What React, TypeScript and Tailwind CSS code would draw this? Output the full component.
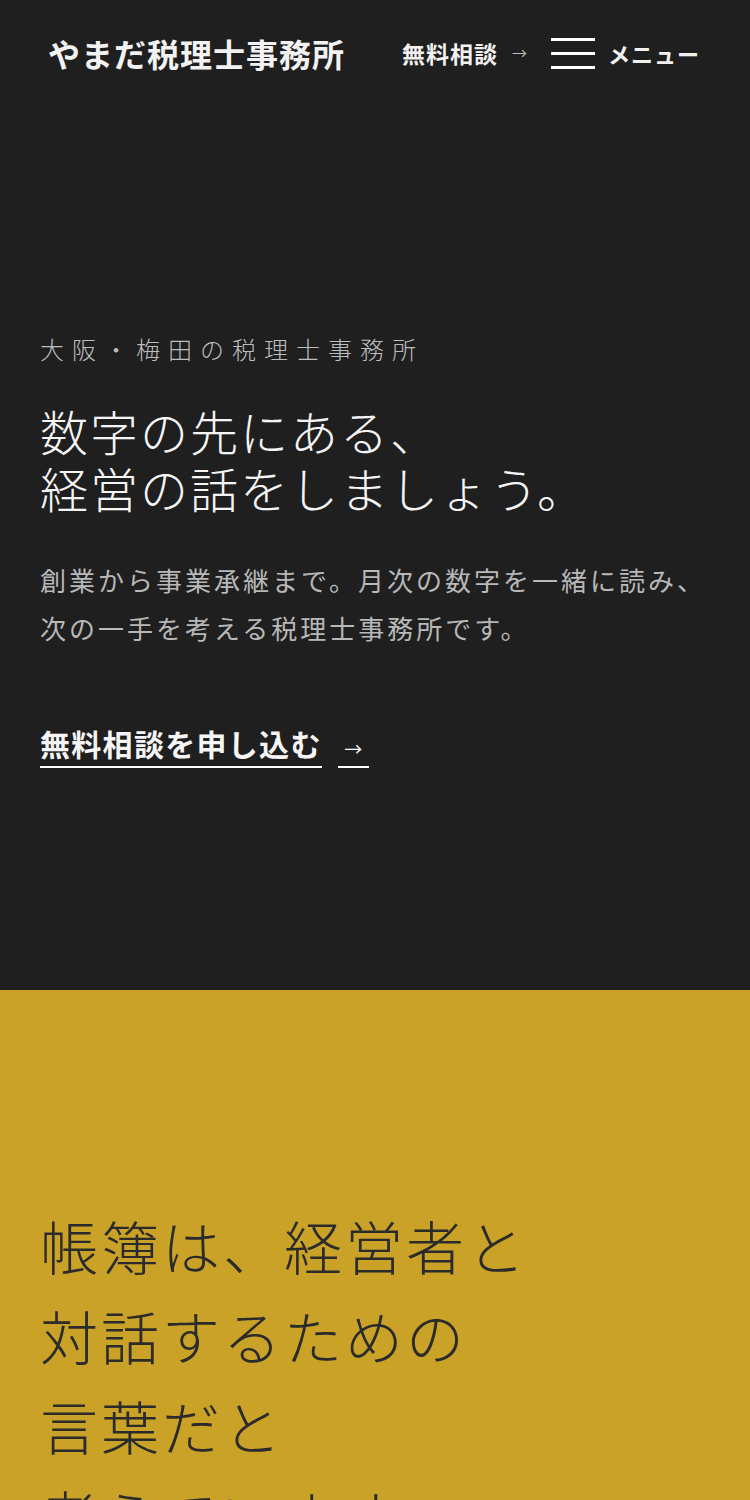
export default function App() {
  const font = { fontFamily: '"Noto Sans CJK JP", "Noto Sans", sans-serif' };
  return (
    <div className="w-[750px] min-h-[1500px] bg-[#c9a227]" style={font}>
      <section className="bg-[#1f1f1f] h-[990px] flex flex-col">
        <header className="h-[106px] flex items-center justify-between pl-12 pr-[50px]">
          <div className="text-[32px] font-bold text-[#f2f2f2] tracking-[1px]">やまだ税理士事務所</div>
          <div className="flex items-center">
            <span className="text-[23px] font-bold text-[#f2f2f2] tracking-[1px]">無料相談</span>
            <span className="ml-[14px] text-[15px] text-[#bdbdbd]">→</span>
            <div className="ml-[24px] w-[44px] flex flex-col gap-[11px]">
              <span className="block h-[3px] bg-white" />
              <span className="block h-[3px] bg-white" />
              <span className="block h-[3px] bg-white" />
            </div>
            <span className="ml-[13px] text-[22px] font-bold text-[#f2f2f2] tracking-[1px]">メニュー</span>
          </div>
        </header>
        <div className="px-10 pt-[231px]">
          <p className="text-[24px] text-[#bdbdbd] tracking-[8px] leading-none font-light">大阪・梅田の税理士事務所</p>
          <h1 className="mt-[41px] text-[48px] leading-[57px] text-[#f5f5f5] font-light tracking-[2px]">
            数字の先にある、
            <br />
            経営の話をしましょう。
          </h1>
          <p className="mt-[40px] text-[26px] leading-[48px] text-[#b8b8b8] tracking-[3px]">
            創業から事業承継まで。月次の数字を一緒に読み、
            <br />
            次の一手を考える税理士事務所です。
          </p>
          <a className="mt-[70px] inline-flex items-end gap-[16px] text-[#f5f5f5]">
            <span className="text-[30px] font-bold leading-[42px] tracking-[1.3px] border-b-2 border-white pb-[2px]">無料相談を申し込む</span>
            <span className="w-[31px] text-center text-[18px] leading-[32px] border-b-2 border-white pb-[2px]">→</span>
          </a>
        </div>
      </section>
      <section className="px-10 pt-[210px]">
        <h2 className="text-[58px] leading-[90px] text-[#2b2b2b] font-light tracking-[3px]">
          帳簿は、経営者と
          <br />
          対話するための
          <br />
          言葉だと
          <br />
          考えています。
        </h2>
      </section>
    </div>
  );
}
